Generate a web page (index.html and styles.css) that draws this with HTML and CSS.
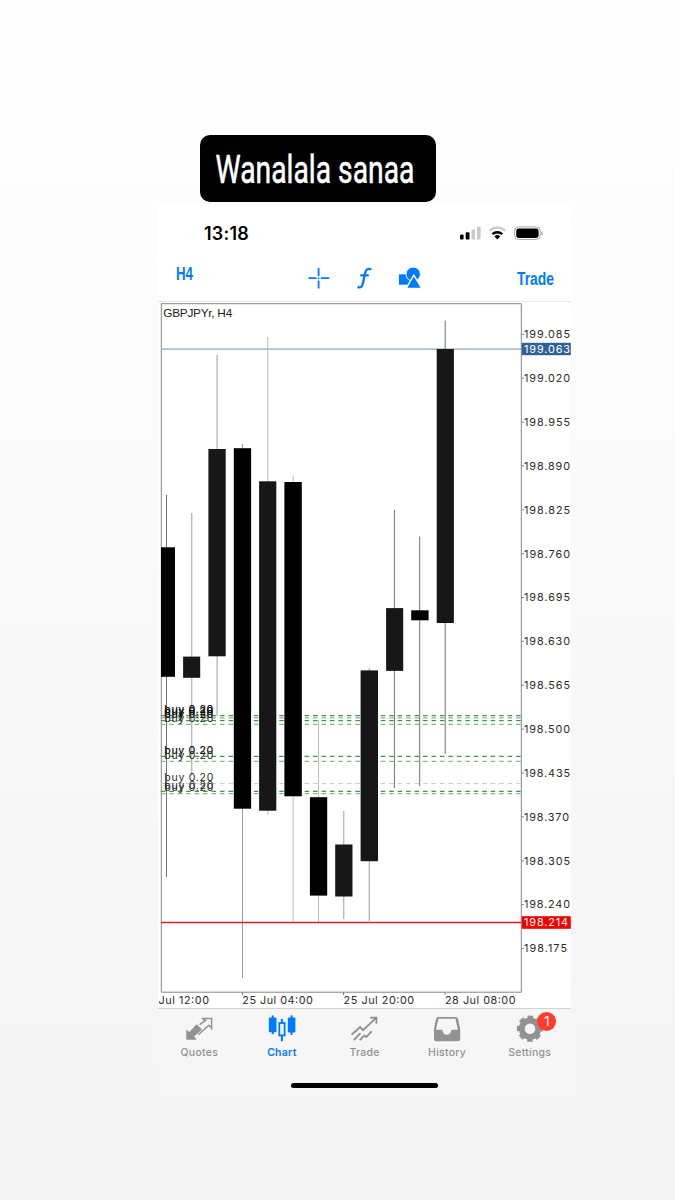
FILE: index.html
```
<!DOCTYPE html>
<html lang="en">
<head>
<meta charset="utf-8">
<title>GBPJPYr, H4</title>
<link rel="stylesheet" href="styles.css">
</head>
<body>
<main class="story">
  <div class="caption">
    <svg width="236" height="67"><text class="caption-text" x="15.5" y="47.5" textLength="199" lengthAdjust="spacingAndGlyphs">Wanalala sanaa</text></svg>
  </div>
  <section class="phone">
    <header class="status">
      <span class="clock">13:18</span>
      <svg class="status-icons" width="84" height="16" viewBox="0 0 84 16">
        <rect x="1" y="9.5" width="3.6" height="5" rx="1"/><rect x="6.7" y="7.2" width="3.8" height="7.3" rx="1"/>
        <g fill="#c9c9c9"><rect x="12.5" y="4.5" width="3.6" height="10" rx="1"/><rect x="18" y="1.8" width="3.6" height="12.7" rx="1"/></g>
        <g fill="none" stroke-width="2.4"><path d="M30.6 5.7a11.2 11.2 0 0 1 15.4 0" stroke="#c9c9c9"/><path d="M33.4 9.1a7.2 7.2 0 0 1 9.8 0" stroke="#000"/></g>
        <path d="M35.4 11.4a4.3 4.3 0 0 1 5.8 0L38.3 14.5z"/>
        <rect x="55.6" y="1.9" width="25.6" height="12.6" rx="4" fill="none" stroke="#a9a9a9"/>
        <rect x="57.2" y="3.5" width="22.4" height="9.4" rx="2.4"/>
        <path d="M82.2 6.2q1.5.6 1.5 2t-1.5 2z" fill="#a9a9a9"/>
      </svg>
    </header>
    <nav class="toolbar">
      <svg class="period" width="18" height="16"><text class="tool-text" x="0" y="13" textLength="17" lengthAdjust="spacingAndGlyphs">H4</text></svg>
      <svg class="tools" width="114" height="24" viewBox="307 266 114 24">
        <path d="M308.5 278.2h8M320.8 278.2h8.5M318.6 268v8M318.6 280.4v8" fill="none" stroke="#007aff" stroke-width="1.8"/>
        <circle cx="318.6" cy="278.2" r=".9" fill="#007aff"/>
        <path d="M371.3 269.4c-3.7-1.7-5.5.4-6.3 4.2l-2 9.5c-.7 3.5-2.2 5.3-5.4 3.8M360.3 275.3h8.5" fill="none" stroke="#007aff" stroke-width="2.3"/>
        <g fill="#007aff"><rect x="399" y="274.3" width="11.6" height="10.4"/><circle cx="413.2" cy="274.2" r="7.2" stroke="#fff"/><path d="M413.8 275.2l8 13.2h-15.6z" stroke="#fff" stroke-width="1.4"/></g>
      </svg>
      <svg class="trade" width="38" height="18"><text class="tool-text" x="0" y="14" textLength="37" lengthAdjust="spacingAndGlyphs">Trade</text></svg>
    </nav>
    <svg class="chart" width="413" height="706" viewBox="158 302 413 706">
      <path class="frame" d="M161.3 992.2V303.7H521.3V992.2zM242.5 992v3M343.5 992v3M445 992v3"/>
      <path class="ticks" d="M521 334.3h3M521 378.2h3M521 422.1h3M521 465.9h3M521 509.8h3M521 553.7h3M521 597.5h3M521 641.4h3M521 685.2h3M521 729.1h3M521 773h3M521 816.9h3M521 860.8h3M521 904.6h3M521 948.5h3"/>
      <g class="orders">
        <path d="M160.8 715.6H521M160.8 720.7H521M160.8 756.3H521M160.8 791.3H521"/>
        <path class="mid" d="M160.8 717.8H521M160.8 724.4H521M160.8 761.4H521M160.8 793.6H521"/>
        <path class="faint" d="M160.8 783.6H521"/>
      </g>
      <path class="ask" d="M161 349.1H521"/>
      <g class="wicks">
        <path class="dark" d="M166.5 495V877M394.4 510V788M419.7 536.5V786M445.2 320.5V754"/>
        <path d="M191.8 513V776M217.1 355V716M242.5 444V978M343.8 811V919M369.2 668V921"/>
        <path class="light" d="M267.8 337V815M293.2 475.5V921M318.5 720V922"/>
      </g>
      <g class="bear">
        <rect x="161" y="547.3" width="14" height="129.5"/><rect x="233.8" y="448.2" width="17.3" height="360.5"/><rect x="284.4" y="482" width="17.4" height="314.3"/><rect x="309.9" y="797.2" width="17.3" height="98.4"/><rect x="411.2" y="610.3" width="17.4" height="10"/>
      </g>
      <g class="bull">
        <rect x="183.1" y="656.6" width="17.1" height="21.2"/><rect x="208.4" y="449" width="17.3" height="207.3"/><rect x="259.1" y="481.3" width="17.2" height="329.4"/><rect x="335.2" y="844.5" width="17.3" height="52"/><rect x="360.6" y="670.4" width="17.4" height="190.8"/><rect x="386.1" y="608.1" width="17.1" height="62.8"/><rect x="436.7" y="349" width="17.2" height="274"/>
      </g>
      <path class="bid" d="M161 922.4H521"/>
      <text class="symbol" x="163.2" y="316.8" textLength="69">GBPJPYr, H4</text>
      <g class="buys">
        <text x="164.3" y="712.8" textLength="49">buy 0.20</text><text x="164.3" y="715.4" textLength="49">buy 0.20</text><text x="164.3" y="717.8" textLength="49">buy 0.20</text><text class="soft" x="164.3" y="722.2" textLength="49">buy 0.20</text>
        <text x="164.3" y="754" textLength="49">buy 0.20</text><text class="soft" x="164.3" y="759" textLength="49">buy 0.20</text>
        <text class="soft" x="164.3" y="780.8" textLength="49">buy 0.20</text><text class="soft" x="164.3" y="789" textLength="49">buy 0.20</text><text class="soft" x="164.3" y="791.2" textLength="49">buy 0.20</text>
      </g>
      <rect x="521.8" y="342.8" width="49" height="12.4" fill="#2f6299"/><rect x="521.8" y="916.2" width="49" height="12.6" fill="#f40000"/>
      <g class="axis">
        <text x="524" y="338.1" textLength="46">199.085</text><text x="524" y="382" textLength="46">199.020</text><text x="524" y="425.9" textLength="46">198.955</text><text x="524" y="469.8" textLength="46">198.890</text><text x="524" y="513.6" textLength="46">198.825</text><text x="524" y="557.5" textLength="46">198.760</text><text x="524" y="601.4" textLength="46">198.695</text><text x="524" y="645.2" textLength="46">198.630</text><text x="524" y="689.1" textLength="46">198.565</text><text x="524" y="733" textLength="46">198.500</text><text x="524" y="776.8" textLength="46">198.435</text><text x="524" y="820.7" textLength="45">198.370</text><text x="524" y="864.6" textLength="46">198.305</text><text x="524" y="908.4" textLength="46">198.240</text><text x="524" y="952.3" textLength="43">198.175</text>
        <text class="on" x="524" y="352.9" textLength="46">199.063</text><text class="on" x="524" y="926.3" textLength="44">198.214</text>
        <text x="158.5" y="1003.6" textLength="50.5">Jul 12:00</text><text x="242.3" y="1003.6" textLength="70.5">25 Jul 04:00</text><text x="343.6" y="1003.6" textLength="70.5">25 Jul 20:00</text><text x="445" y="1003.6" textLength="70.5">28 Jul 08:00</text>
      </g>
    </svg>
    <nav class="tabs">
      <a class="tab"><svg width="30" height="28" viewBox="184 1014 30 28"><path d="M186.3 1039.8V1029.4L189.3 1032L196.6 1024.2L202 1029.4L194.2 1036.6L196.8 1039.8z" fill="#929292"/><path d="M199.6 1024.6L205.6 1020.3L202 1018.6H211.6V1028.4L208.9 1025.3L198.2 1034.8" fill="none" stroke="#929292" stroke-width="1.5"/></svg><span>Quotes</span></a>
      <a class="tab active"><svg width="30" height="28" viewBox="267 1014 30 28"><g fill="#007aff"><rect x="268.9" y="1017.6" width="7.6" height="14.6" rx="1"/><rect x="271.7" y="1015.4" width="2" height="18.8"/><rect x="287.8" y="1017.4" width="7.6" height="15" rx="1"/><rect x="290.6" y="1015.4" width="2" height="19.5"/><path d="M280.9 1019h2v4h-2zM280.9 1036h2v5.3h-2z"/></g><rect x="279.3" y="1023" width="5.3" height="12.4" fill="none" stroke="#007aff" stroke-width="1.8"/></svg><span>Chart</span></a>
      <a class="tab"><svg width="30" height="28" viewBox="349 1014 30 28"><g fill="none" stroke="#929292" stroke-width="1.9"><path d="M351.5 1034.8l8.6-7.7 3 3 13-12.2M370.4 1017.8h6v6M353.8 1040l6.8-6.8M359.9 1040.2l4.4-4.6 1.9 1.4 5.4-5.6"/></g></svg><span>Trade</span></a>
      <a class="tab"><svg width="30" height="28" viewBox="432 1014 30 28"><path fill="#929292" fill-rule="evenodd" d="M438.3 1016.9h17.2q2 0 2.6 2l2.1 10v10q0 2.3-2.3 2.3h-21.6q-2.3 0-2.3-2.3v-10l2-10q.5-2 2.3-2zM438.4 1018.8l-2.4 11h6.2q.7 5 4.6 5t4.7-5h6.4l-2.5-11z"/></svg><span>History</span></a>
      <a class="tab"><svg width="30" height="28" viewBox="514 1014 30 28"><g fill="none" stroke="#929292"><circle cx="529" cy="1028.7" r="8.2" stroke-width="5.8"/><circle cx="529" cy="1028.7" r="11.6" stroke-width="3" stroke-dasharray="5.4 3.71" stroke-dashoffset="2.7"/></g></svg><span>Settings</span><b class="badge">1</b></a>
    </nav>
    <div class="home"></div>
  </section>
</main>
</body>
</html>
```
FILE: styles.css
```
* { box-sizing: border-box; }
body { margin: 0; font-family: Inter, "Liberation Sans", sans-serif; }
svg { display: block; overflow: visible; }
.story {
  width: 675px; height: 1200px; padding-top: 135px;
  background: linear-gradient(#fefefe, #fbfbfb 35%, #f6f6f6 75%, #f4f4f4);
}
.caption { width: 236px; height: 67px; margin-left: 200px; border-radius: 10px; background: #000; }
.caption-text { font: 400 39.5px Roboto, sans-serif; fill: #fff; stroke: #fff; stroke-width: .6; }
.phone { width: 413px; height: 890px; margin: 4px 0 0 158px; background: #fff; display: flex; flex-direction: column; }
.status { height: 50px; padding: 17.5px 28px 0 46px; display: flex; justify-content: space-between; align-items: flex-start; }
.clock { font-size: 18px; line-height: 20px; font-weight: 600; letter-spacing: .2px; }
.status-icons { margin-top: 1px; }
.toolbar { height: 46px; border-bottom: 1px solid #e8e8e8; display: flex; align-items: flex-start; }
.tool-text { font: 700 17.5px "Liberation Sans", sans-serif; fill: #007aff; }
.period { margin: 11px 0 0 18px; }
.tools { margin: 10px 0 0 113px; }
.trade { margin: 15px 0 0 96px; }
.chart { flex: none; }
.frame { fill: none; stroke: #858585; }
.ticks { stroke: #858585; }
.orders path { stroke: #43954a; stroke-width: 1.3; stroke-dasharray: 4.5 3.96; }
.orders .mid { stroke: #7dbc82; }
.orders .faint { stroke: #b5d4b7; stroke-width: 1; }
.ask { stroke: #8fa6b8; stroke-width: 1.2; }
.bid { stroke: #d0202a; stroke-width: 1.5; }
.wicks path { stroke: #9c9c9c; }
.wicks .dark { stroke: #707070; }
.wicks .light { stroke: #bdbdbd; }
.bull { fill: #171717; }
.bear { fill: #000; }
.symbol { font: 11.8px "Liberation Sans", sans-serif; fill: #222; }
.buys { font-size: 10.5px; font-weight: 500; fill: #0c0c0c; }
.buys .soft { font-weight: 400; fill: #2c2c2c; }
.axis { font-size: 10.8px; fill: #2b2b2b; }
.axis .on { fill: #fff; }
.tabs { display: flex; height: 53px; border-top: 1px solid #d2d2d2; background: #f6f6f6; }
.tab { flex: 1; display: flex; flex-direction: column; align-items: center; padding-top: 5px; gap: 4px; position: relative; color: #929292; font-size: 10.5px; line-height: 14px; font-weight: 500; letter-spacing: .25px; }
.active { color: #007aff; font-weight: 600; }
.badge { position: absolute; left: 49px; top: 3px; width: 19px; height: 19px; border-radius: 50%; background: #ff3b30; color: #fff; font-size: 13px; line-height: 19px; font-weight: 400; text-align: center; letter-spacing: 0; }
.home { flex: 1; padding-top: 22px; background: #f6f6f6; }
.home::before { content: ""; display: block; width: 147px; height: 5px; margin: 0 auto; border-radius: 3px; background: #000; }
```
